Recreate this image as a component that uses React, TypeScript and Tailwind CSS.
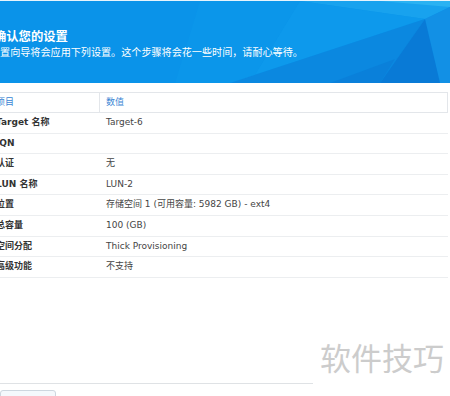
import React from 'react'

const rows: { label: string; value: string }[] = [
  { label: 'Target 名称', value: 'Target-6' },
  { label: 'IQN', value: '' },
  { label: '认证', value: '无' },
  { label: 'LUN 名称', value: 'LUN-2' },
  { label: '位置', value: '存储空间 1 (可用容量: 5982 GB) - ext4' },
  { label: '总容量', value: '100 (GB)' },
  { label: '空间分配', value: 'Thick Provisioning' },
  { label: '高级功能', value: '不支持' },
]

function Banner() {
  return (
    <div className="relative h-[82px] overflow-hidden bg-[#0a93e9]">
      <svg className="absolute inset-0" width="450" height="82" viewBox="0 0 450 82">
        <polygon points="200,0 300,0 250,82 175,82" fill="#0c97eb" opacity="0.6" />
        <polygon points="300,0 450,0 450,6 425,18" fill="#18a2ee" />
        <polygon points="380,0 450,0 450,6" fill="#2bb2f2" />
        <polygon points="300,0 425,18 230,82 250,82" fill="#0e9bec" opacity="0.7" />
        <polygon points="425,18 450,6 450,82 440,82" fill="#1290e5" />
        <polygon points="230,82 425,18 380,82" fill="#0b88e0" />
        <polygon points="380,82 425,18 440,82" fill="#097ad6" />
        <polygon points="330,82 395,58 380,82" fill="#0a80da" />
      </svg>
      <div className="relative -ml-[6px] pt-[28px] text-white">
        <h1 className="text-[12.3px] font-bold leading-[14px]">确认您的设置</h1>
        <p className="-ml-[4px] mt-[3px] text-[10.1px] leading-[12px]">
          设置向导将会应用下列设置。这个步骤将会花一些时间，请耐心等待。
        </p>
      </div>
    </div>
  )
}

function SummaryTable() {
  return (
    <div className="-ml-[10px] mt-[9px] w-[458px] text-[9px]" style={{ fontFamily: '"DejaVu Sans", "Noto Sans CJK SC", sans-serif' }}>
      <div className="flex h-[21px] items-center border-y border-r border-[#e3e6ea] text-[#3a86d4]">
        <div className="flex h-full w-[110px] items-center border-r border-[#e3e6ea] pl-[6px]">项目</div>
        <div className="flex-1 pl-[6px]">数值</div>
      </div>
      {rows.map(row => (
        <div key={row.label} className="flex h-[20.6px] items-center border-b border-[#eceef0] text-[#333]">
          <div className="w-[110px] pl-[6px] font-bold">{row.label}</div>
          <div className="flex-1 pl-[6px] text-[#444]">{row.value}</div>
        </div>
      ))}
    </div>
  )
}

export default function App() {
  return (
    <div
      className="relative flex h-[396px] w-[450px] flex-col overflow-hidden bg-white"
      style={{ fontFamily: '"Noto Sans CJK SC", "Noto Sans", sans-serif' }}
    >
      <div className="h-px bg-[#e6f3fc]" />
      <Banner />
      <SummaryTable />

      <div className="-mb-[8px] mt-auto">
        <div className="h-px w-[313px] bg-[#dfe2e5]" />
        <div className="mt-[6px] h-[14px] w-[56px] rounded-[3px] border border-[#cdd6df] bg-[#f4f8fc]" />
      </div>

      <div className="absolute right-[6px] top-[337px] bg-white pl-[7px] text-[31px] leading-[40px] text-[#cccccc]">
        软件技巧
      </div>
    </div>
  )
}
